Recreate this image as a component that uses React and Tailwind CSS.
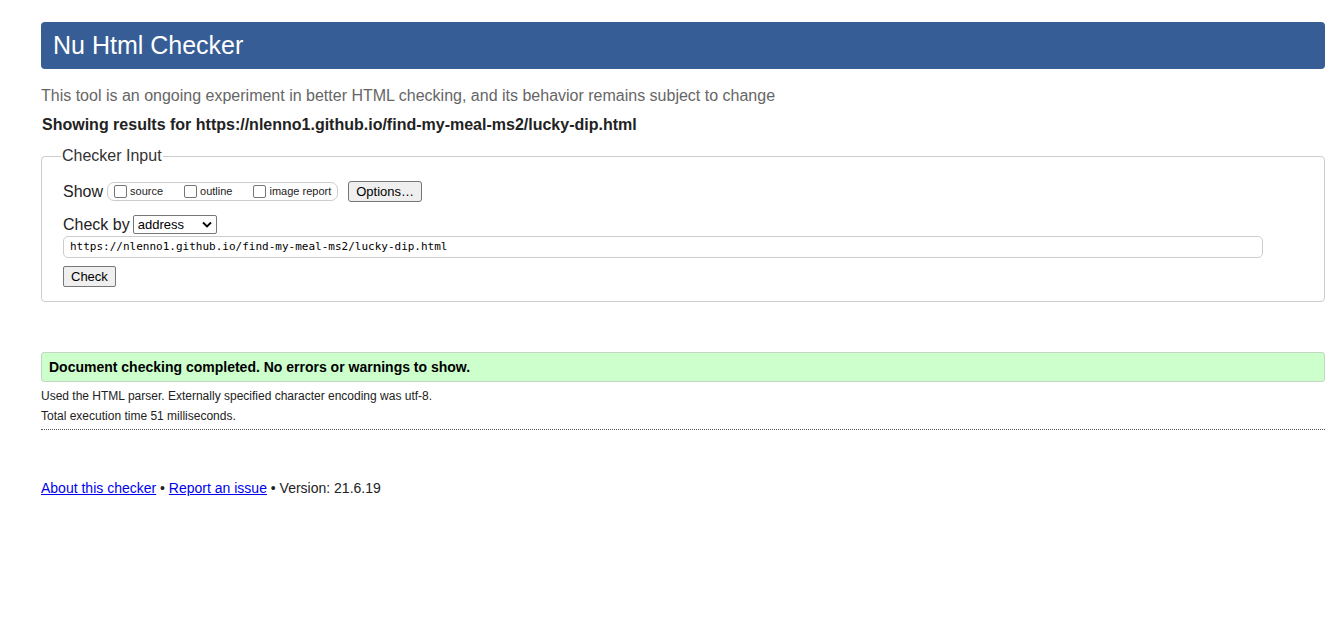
import React from 'react';

const Checkbox = ({ label }) => (
  <label className="flex items-center mr-[18px] last:mr-[6px]">
    <span className="w-[13px] h-[13px] border border-[#767676] rounded-[2px] bg-white mx-[3px]" />
    <span className="text-[11px] text-[#222]">{label}</span>
  </label>
);

const App = () => {
  return (
    <div className="min-h-screen bg-white pl-[41px] pr-[15px] pt-[22px] font-['Liberation_Sans',Arial,sans-serif] text-[#222]">
      <h1 className="h-[47px] flex items-center bg-[#365d95] rounded-[4px] pl-[12px] text-[25px] text-white">
        Nu Html Checker
      </h1>

      <p className="mt-[17px] text-[16px] leading-[20px] text-[#666]">
        This tool is an ongoing experiment in better HTML checking, and its behavior remains subject to change
      </p>
      <p className="mt-[9px] ml-[1px] text-[16px] leading-[20px] font-bold text-[#222]">
        Showing results for https://nlenno1.github.io/find-my-meal-ms2/lucky-dip.html
      </p>

      <fieldset className="mt-[11px] border border-[#cccccc] rounded-[4px] px-[21px] pb-[13px]">
        <legend className="-ml-[2px] px-[1px] text-[16px] leading-[20px] text-[#333]">Checker Input</legend>

        <div className="flex items-center mt-[15px] h-[21px]">
          <span className="text-[16px] mr-[4px]">Show</span>
          <div className="flex items-center h-[19px] border border-[#cccccc] rounded-[7px] pl-[3px]">
            <Checkbox label="source" />
            <Checkbox label="outline" />
            <Checkbox label="image report" />
          </div>
          <button className="ml-[10px] h-[21px] px-[7px] bg-[#efefef] border border-[#767676] rounded-[3px] text-[13px] text-black">
            Options…
          </button>
        </div>

        <div className="flex items-center mt-[13px] h-[19px]">
          <span className="text-[16px] mr-[3px]">Check by</span>
          <div className="flex items-center justify-between w-[84px] h-[19px] border border-[#767676] rounded-[2px] pl-[4px] pr-[4px] text-[13px] text-black">
            <span>address</span>
            <svg width="10" height="7" viewBox="0 0 10 7">
              <path d="M1 1.5 L5 5.5 L9 1.5" fill="none" stroke="#000" strokeWidth="1.8" />
            </svg>
          </div>
        </div>

        <div className="mt-[2px] w-[1200px] h-[22px] flex items-center border border-[#cccccc] rounded-[5px] pl-[6px] font-['DejaVu_Sans_Mono',monospace] text-[11px] text-black">
          https://nlenno1.github.io/find-my-meal-ms2/lucky-dip.html
        </div>

        <button className="mt-[8px] h-[21px] px-[7px] bg-[#efefef] border border-[#767676] rounded-[2px] text-[13px] text-black">
          Check
        </button>
      </fieldset>

      <div className="mt-[50px] h-[30px] flex items-center bg-[#ccffcc] border border-[#c2d6c2] rounded-[3px] pl-[7px] text-[14px] font-bold text-black">
        Document checking completed. No errors or warnings to show.
      </div>
      <p className="mt-[6px] text-[12px] leading-[16px] text-[#222]">
        Used the HTML parser. Externally specified character encoding was utf-8.
      </p>
      <p className="mt-[4px] text-[12px] leading-[16px] text-[#222]">Total execution time 51 milliseconds.</p>
      <div className="mt-[5px] border-b border-dotted border-[#555]" />

      <p className="mt-[49px] text-[14px] leading-[18px] text-[#222]">
        <a href="#" className="text-[#0000ee] underline">About this checker</a>
        {' • '}
        <a href="#" className="text-[#0000ee] underline">Report an issue</a>
        {' • Version: 21.6.19'}
      </p>
    </div>
  );
};

export default App;
